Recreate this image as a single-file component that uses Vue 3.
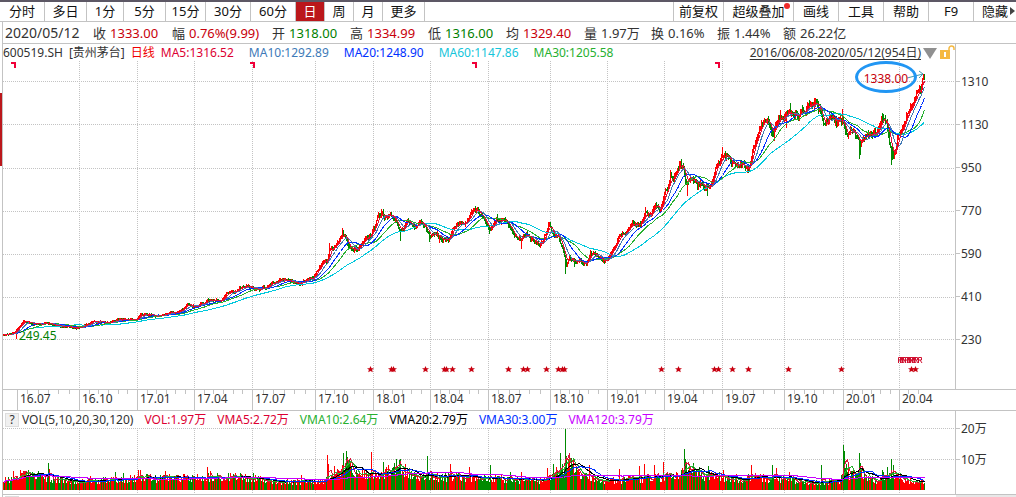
<script setup>
const periods = ['分时', '多日', '1分', '5分', '15分', '30分', '60分', '日', '周', '月', '更多']
const tools = ['前复权', '超级叠加', '画线', '工具', '帮助', 'F9', '隐藏']
const quote = [
  { label: '收', value: '1333.00', tone: 'up' },
  { label: '幅', value: '0.76%(9.99)', tone: 'up' },
  { label: '开', value: '1318.00', tone: 'down' },
  { label: '高', value: '1334.99', tone: 'up' },
  { label: '低', value: '1316.00', tone: 'down' },
  { label: '均', value: '1329.40', tone: 'up' },
  { label: '量', value: '1.97万', tone: '' },
  { label: '换', value: '0.16%', tone: '' },
  { label: '振', value: '1.44%', tone: '' },
  { label: '额', value: '26.22亿', tone: '' },
]
const priceTicks = ['1310', '1130', '950', '770', '590', '410', '230']
const dates = ['16.07', '16.10', '17.01', '17.04', '17.07', '17.10', '18.01', '18.04', '18.07', '18.10', '19.01', '19.04', '19.07', '19.10', '20.01', '20.04']
const quarterX = [17, 79, 137, 194, 252, 315, 373, 430, 488, 550, 607, 664, 722, 784, 843, 899, 955]
const gridX = quarterX.slice(1, -1)
const gridY = [81, 124, 168, 211, 254, 297, 339]
const stars = [370, 391, 393, 425, 444, 446, 452, 471, 508, 523, 527, 546, 558, 562, 564, 661, 678, 714, 718, 732, 748, 788, 841, 911, 915]
const flags = [11, 250, 472, 715]
const reports = [900, 902, 904, 907, 909, 911, 912, 914, 916, 920]

const minorTicks = quarterX.slice(0, -1).flatMap((x, i) => {
  const step = (quarterX[i + 1] - x) / 6
  return [1, 2, 3, 4, 5].map(n => Math.round(x + step * n))
}).filter(x => x < 926)

const closeAnchors = [
  [3, 335], [14, 333], [20, 325], [23, 322], [33, 324], [45, 323], [60, 326], [77, 328], [93, 322], [110, 323], [120, 319], [135, 320],
  [140, 315], [150, 315], [160, 316], [170, 313], [180, 312], [187, 305], [195, 307], [208, 300], [220, 301], [227, 293], [235, 292],
  [240, 287], [248, 286], [256, 290], [262, 289], [270, 284], [282, 280], [290, 282], [300, 283], [306, 280], [313, 277], [317, 270],
  [322, 262], [327, 262], [329, 250], [335, 247], [338, 241], [342, 233], [346, 238], [349, 249], [357, 249], [363, 242], [370, 235],
  [374, 228], [378, 215], [382, 213], [384, 219], [390, 216], [395, 219], [399, 231], [403, 230], [407, 221], [413, 228], [420, 222],
  [425, 226], [429, 237], [435, 232], [440, 239], [448, 239], [453, 229], [457, 225], [465, 224], [470, 215], [473, 212], [477, 211],
  [482, 216], [487, 226], [490, 230], [496, 220], [505, 222], [510, 228], [514, 237], [520, 240], [526, 234], [532, 239], [540, 245],
  [545, 234], [549, 224], [553, 238], [558, 237], [563, 250], [566, 265], [569, 258], [575, 262], [580, 262], [586, 264], [590, 254],
  [598, 256], [604, 262], [609, 255], [615, 246], [619, 234], [625, 233], [631, 223], [640, 224], [645, 211], [650, 216], [655, 206],
  [660, 209], [664, 192], [667, 190], [670, 175], [673, 181], [676, 171], [680, 165], [683, 170], [686, 182], [692, 178], [697, 187],
  [701, 182], [706, 188], [712, 180], [716, 165], [719, 161], [723, 155], [728, 159], [735, 165], [742, 164], [748, 168], [752, 155],
  [755, 142], [760, 127], [768, 121], [773, 135], [778, 119], [784, 115], [790, 113], [797, 116], [803, 110], [810, 104], [815, 101],
  [820, 112], [823, 123], [830, 118], [836, 123], [842, 119], [846, 134], [853, 128], [860, 147], [866, 133], [872, 134], [878, 134],
  [882, 118], [886, 122], [890, 147], [893, 153], [898, 137], [902, 125], [907, 115], [911, 104], [918, 92], [923, 77], [924, 78],
]
const volumeAnchors = [
  [3, 11], [15, 10], [22, 17], [50, 13], [60, 9], [100, 10], [140, 12], [200, 13], [240, 13], [290, 8], [325, 9], [330, 18], [340, 18],
  [346, 28], [355, 18], [375, 15], [400, 23], [415, 14], [430, 14], [480, 13], [510, 10], [545, 10], [564, 23], [572, 26], [580, 14],
  [600, 9], [640, 11], [680, 14], [688, 24], [700, 15], [740, 12], [760, 12], [780, 11], [800, 9], [815, 7], [840, 9], [845, 18],
  [860, 14], [875, 10], [893, 18], [905, 10], [924, 8],
]
const lowSpikes = { 16: 339, 400: 241, 429: 242, 439: 243, 448: 243, 521: 249, 489: 234, 565: 274, 574: 267, 687: 196, 707: 196, 747: 173, 774: 141, 786: 128, 859: 159, 860: 155, 891: 165, 892: 160 }
const highSpikes = { 329: 243, 342: 228, 343: 230, 381: 209, 382: 211, 471: 209, 476: 208, 497: 214, 548: 222, 590: 250, 645: 207, 655: 203, 670: 170, 679: 161, 722: 147, 766: 119, 780: 110, 790: 103, 842: 109, 882: 113, 885: 115, 814: 98 }
const volumeSpikes = {
  13: 19, 22: 17, 48: 27, 49: 21, 60: 14, 90: 14, 115: 18, 123: 17, 138: 20, 140: 20, 165: 19, 178: 15, 207: 23, 210: 19, 240: 17, 253: 17, 301: 15,
  327: 35, 328: 26, 343: 37, 346: 39, 347: 33, 371: 38, 383: 28, 396: 31, 400: 31, 427: 34, 450: 26, 469: 23, 490: 25, 510: 18, 521: 18,
  547: 22, 553: 26, 560: 37, 565: 61, 566: 34, 568: 31, 589: 25, 619: 21, 639: 24, 644: 26, 654: 25, 663: 28, 684: 41, 685: 31, 699: 23, 708: 24,
  723: 20, 751: 25, 772: 25, 776: 22, 789: 18, 821: 25, 843: 45, 844: 39, 846: 26, 859: 37, 860: 27, 861: 20, 882: 20, 887: 23, 891: 31, 893: 25,
}

let seed = 51907
const random = () => {
  seed = (seed * 1103515245 + 12345) % 2147483648
  return seed / 2147483648
}
const interpolate = (points, x) => {
  const i = Math.max(1, points.findIndex(p => p[0] >= x))
  const [x0, y0] = points[i - 1]
  const [x1, y1] = points[i]
  return y0 + (y1 - y0) * (x - x0) / (x1 - x0)
}
const average = (values, n) => values.map((_, i) => {
  const part = values.slice(Math.max(0, i - n + 1), i + 1)
  return part.reduce((a, b) => a + b, 0) / part.length
})
const line = values => values.map((v, i) => `${i ? 'L' : 'M'}${i + 3.5} ${v.toFixed(1)}`).join('')

const closes = []
const volumes = []
const candles = { up: '', down: '' }
const bars = { up: '', down: '' }
let drift = 0
for (let x = 3; x <= 924; x++) {
  const base = interpolate(closeAnchors, x)
  const amp = 0.9 + (340 - base) / 42
  drift = drift * 0.5 + (random() - 0.5) * amp
  const close = base + drift
  const open = closes.length ? closes[closes.length - 1] : close
  const side = close <= open ? 'up' : 'down'
  const high = highSpikes[x] ?? Math.max(74, Math.min(open, close) - random() * amp * 0.6)
  const low = lowSpikes[x] ?? Math.max(open, close) + random() * amp * 0.6
  candles[side] += `M${x + 0.5} ${Math.floor(high)}V${Math.ceil(Math.max(low, high + 1))}`
  const volume = volumeSpikes[x] ?? interpolate(volumeAnchors, x) * (0.6 + random() * 0.75)
  bars[side] += `M${x + 0.5} 490V${Math.round(490 - volume)}`
  closes.push(close)
  volumes.push(volume)
}
const averages = [[60, 'ma60'], [30, 'ma30'], [20, 'ma20'], [10, 'ma10'], [5, 'ma5']].map(([n, name]) => ({ name, d: line(average(closes, n)) }))
const volumeAverages = [[5, 'ma5'], [10, 'ma30'], [20, 'vma20'], [30, 'ma20'], [120, 'vma120']].map(([n, name]) => ({ name, d: line(average(volumes, n).map(v => 490 - v)) }))
</script>

<template>
  <main class="terminal">
    <div class="window-edge"></div>
    <nav class="toolbar">
      <button v-for="p in periods" :key="p" type="button" :class="{ active: p === '日' }">{{ p }}</button>
      <span class="spacer"></span>
      <button v-for="t in tools" :key="t" type="button">
        {{ t }}
        <i v-if="t === '超级叠加'" class="dot"></i>
        <i v-if="t === '隐藏'" class="more"></i>
      </button>
    </nav>
    <section class="body">
      <aside class="rail"><i class="rail-mark"></i></aside>
      <div class="content">
        <dl class="quote">
          <div class="day">2020/05/12</div>
          <div v-for="q in quote" :key="q.label"><dt>{{ q.label }}</dt><dd :class="q.tone">{{ q.value }}</dd></div>
        </dl>
        <section class="pane price-pane">
          <div class="plot">
            <header class="legend">
              <span class="symbol">600519.SH</span><span class="symbol">[贵州茅台]</span><span class="daily">日线</span>
              <span class="t-ma5">MA5:1316.52</span><span class="t-ma10">MA10:1292.89</span><span class="t-ma20">MA20:1248.90</span>
              <span class="t-ma60">MA60:1147.86</span><span class="t-ma30">MA30:1205.58</span>
              <button type="button" class="range">2016/06/08-2020/05/12(954日)</button>
              <button type="button" class="icon" aria-label="选择区间"><svg width="14" height="14" viewBox="0 0 14 14"><path d="M0 2H14L7 13Z" fill="#909090" /></svg></button>
              <button type="button" class="icon" aria-label="解锁">
                <svg width="16" height="15" viewBox="0 0 16 15"><path d="M10 6V3.5A2.5 2.5 0 0 1 15 3.5V5" fill="none" stroke="#f5b942" stroke-width="1.5" /><rect x="1" y="5" width="10" height="9" fill="#f5b942" /><path d="M5 7H7V12H5Z" fill="#fff" /></svg>
              </button>
            </header>
            <div class="canvas">
              <svg viewBox="3 61 952 328" preserveAspectRatio="none" shape-rendering="crispEdges">
                <g class="grid">
                  <path v-for="x in gridX" :key="'x' + x" :d="`M${x + 0.5} 61V389`" />
                  <path v-for="y in gridY" :key="'y' + y" :d="`M3 ${y + 0.5}H955`" />
                </g>
                <path class="candle up-line" :d="candles.up" />
                <path class="candle down-line" :d="candles.down" />
                <path v-for="m in averages" :key="m.name" class="average" :class="m.name" :d="m.d" />
                <path v-for="x in flags" :key="x" :d="`M${x} 62h5v6h-2v-4h-3z`" fill="#f00038" />
                <g shape-rendering="auto">
                  <path v-for="x in stars" :key="x" :d="`M${x + 0.5} 366l1 2.300h2.500l-1.900 1.500.7 2.500-2.300-1.400-2.300 1.400.7-2.500-1.900-1.500h2.500z`" fill="#c80010" />
                  <path v-for="x in reports" :key="x" :d="`M${x - 1.5} 363V357.500h3v2.500h-3M${x} 360l2 3`" class="report" />
                  <path d="M907 78L923 74M919 71l4 3-4 4" class="arrow" />
                </g>
              </svg>
              <span class="peak">1338.00</span>
              <span class="trough">249.45</span>
            </div>
          </div>
          <div class="scale price-scale"><span v-for="p in priceTicks" :key="p">{{ p }}</span></div>
        </section>
        <div class="timeline">
          <svg viewBox="3 0 1013 4" preserveAspectRatio="none" shape-rendering="crispEdges"><path v-for="x in minorTicks" :key="x" :d="`M${x + 0.5} 0V4`" stroke="#c3c3c3" /></svg>
          <time v-for="d in dates" :key="d">{{ d }}</time>
        </div>
        <section class="pane">
          <div class="plot">
            <header class="legend volume-legend">
              <button type="button" class="help">?</button>
              <span class="symbol">VOL(5,10,20,30,120)</span><span class="t-ma5">VOL:1.97万</span><span class="t-ma5">VMA5:2.72万</span><span class="t-ma30">VMA10:2.64万</span>
              <span class="t-vma20">VMA20:2.79万</span><span class="t-ma20">VMA30:3.00万</span><span class="t-vma120">VMA120:3.79万</span>
            </header>
            <svg class="volume" viewBox="3 428 952 66" preserveAspectRatio="none" shape-rendering="crispEdges">
              <g class="grid">
                <path v-for="x in gridX" :key="x" :d="`M${x + 0.5} 428V494`" />
                <path d="M3 428.500H955M3 459.500H955" />
              </g>
              <path class="candle up-line" :d="bars.up" />
              <path class="candle down-line" :d="bars.down" />
              <path v-for="m in volumeAverages" :key="m.name" class="average" :class="m.name" :d="m.d" />
            </svg>
          </div>
          <div class="scale volume-scale"><span>20万</span><span>10万</span></div>
        </section>
        <footer class="next-pane"><i></i><b></b></footer>
      </div>
    </section>
  </main>
</template>

<style>
body { background: #fff; }
</style>

<style scoped>
.terminal { box-sizing: border-box; display: flex; flex-direction: column; min-height: 100vh; overflow: hidden; background: #fff; color: #333; font: 12px/17px "Noto Sans", "Noto Sans CJK SC", sans-serif; }
button { margin: 0; padding: 0; border: 0; background: none; color: inherit; font: inherit; cursor: pointer; white-space: nowrap; }
svg { display: block; }
.window-edge { height: 2px; background: #5d5865; }
.toolbar { display: grid; grid-template-columns: 45px 42px 37px 42px 40px 45px 45px 29px 29px 29px 42px 1fr 50px 70px 45px 45px 45px 45px 42px; height: 20px; box-sizing: border-box; border-bottom: 1px solid #c3c3c3; color: #111; font-size: 13px; line-height: 19px; }
.toolbar button, .spacer { position: relative; border-right: 1px solid #c3c3c3; }
.toolbar button:last-child { border-right: 0; }
.toolbar .active { background: #bb171b; color: #fff; }
.dot { position: absolute; top: 1px; right: 3px; width: 6px; height: 6px; border-radius: 50%; background: #ee2a2a; }
.more { position: absolute; top: 5px; right: 1px; border: 4px solid transparent; border-left: 5px solid #444; border-right: 0; }
.body { flex: 1; display: flex; }
.rail { width: 2px; padding-top: 71px; border-right: 1px solid #c3c3c3; }
.rail-mark { display: block; height: 73px; background: #bb171b; }
.content { flex: 1; min-width: 0; display: flex; flex-direction: column; }
.quote { display: grid; grid-template-columns: 88px 79px 100px 78px 78px 78px 78px 67px 66px 66px 1fr; box-sizing: border-box; height: 22px; margin: 0; padding-left: 2px; border-bottom: 1px solid #c3c3c3; font-size: 13px; line-height: 22px; white-space: nowrap; }
.quote div { display: flex; gap: 4px; }
.quote .day { font-size: 14px; }
.quote dd { margin: 0; }
.up { color: #c8000a; }
.down { color: #008000; }
.pane { display: flex; }
.price-pane { flex: 1; min-height: 345px; }
.plot { flex: 1; min-width: 0; display: flex; flex-direction: column; }
.legend { display: flex; align-items: center; height: 17px; white-space: nowrap; }
.legend span { margin-right: 15px; }
.legend .symbol, .legend .daily { margin-right: 6px; }
.daily { color: #f00000; }
.range { margin-left: auto; text-decoration: underline; text-underline-offset: 2px; }
.icon { margin-left: 2px; }
.canvas { position: relative; flex: 1; }
.canvas svg { position: absolute; width: 100%; height: 100%; }
.peak { position: absolute; top: 0; right: 4%; width: 56px; height: 26px; border: 3px solid #2196f3; border-radius: 50%; color: #c8000a; line-height: 30px; text-align: center; }
.trough { position: absolute; left: 16px; top: 81%; color: #008000; }
.scale { width: 60px; border-left: 1px solid #c3c3c3; display: grid; font-size: 12px; }
.scale span { display: flex; align-items: center; }
.scale span::before { content: ""; width: 4px; height: 1px; margin-right: 1px; background: #c3c3c3; }
.price-scale { grid-template-rows: repeat(7, 43fr) 28fr; padding-top: 16px; }
.volume-scale { grid-template-rows: 31px 31px; padding-top: 2px; align-content: start; }
.grid path { stroke: #c3c3c3; stroke-dasharray: 1 1; fill: none; }
.candle { fill: none; stroke-width: 1; }
.up-line { stroke: #f00; }
.down-line { stroke: #008a00; }
.average { fill: none; stroke-width: 1; }
.ma5 { stroke: #dc143c; }
.ma10 { stroke: #4179b5; }
.ma20 { stroke: #0030ff; }
.ma30 { stroke: #27b030; }
.ma60 { stroke: #00c8dc; }
.vma20 { stroke: #000; }
.vma120 { stroke: #c800ff; }
.t-ma5 { color: #dc0032; }
.t-ma10 { color: #3d7ab8; }
.t-ma20 { color: #0030ff; }
.t-ma30 { color: #27b030; }
.t-ma60 { color: #15c5da; }
.t-vma20 { color: #000; }
.t-vma120 { color: #c800ff; }
.report { fill: none; stroke: #d01030; stroke-width: 1; }
.arrow { fill: none; stroke: #3d9bb0; stroke-width: 1; }
.timeline { position: relative; display: grid; grid-template-columns: 62fr 58fr 57fr 58fr 63fr 58fr 57fr 58fr 62fr 57fr 57fr 58fr 62fr 59fr 56fr 117fr; height: 20px; padding-left: 14px; border: solid #c3c3c3; border-width: 1px 0; font-size: 12px; line-height: 18px; }
.timeline svg { position: absolute; width: 100%; height: 4px; }
.timeline time { min-width: 0; padding-left: 2px; border-left: 1px solid #c3c3c3; }
.volume-legend span, .volume-legend .symbol { margin-right: 11px; }
.help { width: 14px; height: 14px; margin: 0 3px 0 2px; border: 1px solid #ddd; background: #f0f0f0; line-height: 12px; }
.volume { width: 100%; height: 66px; }
.next-pane { display: flex; justify-content: space-between; height: 2px; border-top: 1px solid #c3c3c3; }
.next-pane i { width: 14px; margin: 1px 0 0 2px; background: #ddd; }
.next-pane b { width: 60px; background: #e8e8e8; }
</style>
